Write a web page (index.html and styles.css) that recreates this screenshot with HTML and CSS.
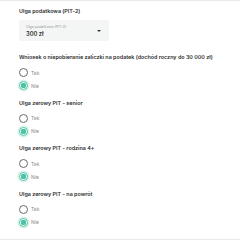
FILE: index.html
```html
<!DOCTYPE html>
<html lang="pl">
<head>
    <meta charset="UTF-8">
    <meta name="viewport" content="width=device-width, initial-scale=1.0">
    <title>Ulgi podatkowe</title>
    <link rel="stylesheet" href="styles.css">
</head>
<body>
    <div class="page">
        <div class="field">
            <h2 class="field-title first">Ulga podatkowa (PIT-2)</h2>
            <div class="select">
                <div class="select-text">
                    <span class="select-label">Ulga podatkowa (PIT-2)</span>
                    <span class="select-value">300 zł</span>
                </div>
                <span class="select-arrow"></span>
            </div>
        </div>

        <div class="field">
            <h2 class="field-title">Wniosek o niepobieranie zaliczki na podatek (dochód roczny do 30 000 zł)</h2>
            <label class="radio"><span class="dot"></span>Tak</label>
            <label class="radio"><span class="dot checked"></span>Nie</label>
        </div>

        <div class="field">
            <h2 class="field-title">Ulga zerowy PIT - senior</h2>
            <label class="radio"><span class="dot"></span>Tak</label>
            <label class="radio"><span class="dot checked"></span>Nie</label>
        </div>

        <div class="field">
            <h2 class="field-title">Ulga zerowy PIT - rodzina 4+</h2>
            <label class="radio"><span class="dot"></span>Tak</label>
            <label class="radio"><span class="dot checked"></span>Nie</label>
        </div>

        <div class="field">
            <h2 class="field-title">Ulga zerowy PIT - na powrót</h2>
            <label class="radio"><span class="dot"></span>Tak</label>
            <label class="radio"><span class="dot checked"></span>Nie</label>
        </div>
    </div>
</body>
</html>
```

FILE: styles.css
```css
body {
    margin: 0;
    padding: 0;
    background-color: #ffffff;
    font-family: 'Inter', 'Open Sans', sans-serif;
}

.page {
    height: 232px;
    border-top: 1px solid #e9e9e9;
    border-bottom: 1px solid #e9e9e9;
    padding: 6px 0 0 19px;
}

.field-title {
    margin: 6.5px 0 5px 0;
    font-size: 5.4px;
    line-height: 8px;
    font-weight: 600;
    color: #2d2d2d;
}

.field-title.first {
    margin-top: 0;
}

.select {
    display: flex;
    align-items: center;
    justify-content: space-between;
    width: 90px;
    height: 21px;
    box-sizing: border-box;
    padding: 0 8px 0 7px;
    margin-bottom: 12px;
    background-color: #f4f5f5;
    border-radius: 2px;
}

.select-text {
    display: flex;
    flex-direction: column;
}

.select-label {
    font-size: 3.6px;
    line-height: 6px;
    color: #9a9a9a;
}

.select-value {
    font-size: 5.8px;
    line-height: 8px;
    font-weight: 600;
    color: #2d2d2d;
}

.select-arrow {
    width: 0;
    height: 0;
    border-left: 2px solid transparent;
    border-right: 2px solid transparent;
    border-top: 2px solid #333;
}

.radio {
    display: flex;
    align-items: center;
    height: 13px;
    font-size: 5px;
    color: #8a8a8a;
}

.dot {
    width: 9px;
    height: 9px;
    box-sizing: border-box;
    border: 1px solid #6a6a6a;
    border-radius: 50%;
    margin-right: 3px;
}

.dot.checked {
    border-color: #4cc3a3;
    background: radial-gradient(circle, #4cc3a3 0 2.6px, #ffffff 3px);
    box-shadow: 0 0 0 1.5px #d6f2ea;
}
```
